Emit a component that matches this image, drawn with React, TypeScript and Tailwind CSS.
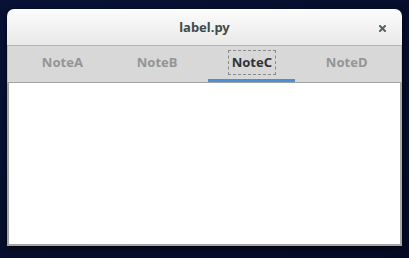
import React from "react";

const tabs = ["NoteA", "NoteB", "NoteC", "NoteD"];

export default function App() {
  const active = 2;
  return (
    <div className="w-[409px] h-[258px] bg-gradient-to-br from-[#081236] to-[#050b24] pt-[9px] pl-[7px] overflow-hidden">
      <div className="w-[395px] h-[237px] flex flex-col rounded-t-[7px] overflow-hidden shadow-[0_2px_6px_rgba(0,0,0,0.7)] font-['Noto_Sans',sans-serif]">
        <div className="relative h-[37px] shrink-0 flex items-center justify-center bg-gradient-to-b from-[#fcfcfc] to-[#e9e9e9] border-b border-[#b4b4b4]">
          <span className="text-[13px] font-bold text-[#414a4c] leading-none">label.py</span>
          <svg className="absolute right-[16px] top-[16px]" width="7" height="7" viewBox="0 0 7 7">
            <path d="M1 1 L6 6 M6 1 L1 6" stroke="#56636a" strokeWidth="2" strokeLinecap="square" />
          </svg>
        </div>
        <div className="h-[37px] shrink-0 flex px-[7px] bg-[#d8d8d8] border-b border-[#a2a2a2] border-x border-x-[#bdbdbd]">
          {tabs.map((t, i) => (
            <div key={t} className="w-[95px] h-full flex flex-col items-center">
              <div className="flex-1 flex items-center">
                <span
                  className={
                    i === active
                      ? "text-[13px] font-bold leading-none text-[#2e3436] px-[3px] py-[5px] border border-dashed border-[#8a8a8a]"
                      : "text-[13px] font-bold leading-none text-[#929596] px-[3px] py-[5px] border border-transparent"
                  }
                >
                  {t}
                </span>
              </div>
              <div className={i === active ? "w-[87px] h-[3px] bg-[#4a90d9]" : "w-[87px] h-[3px]"} />
            </div>
          ))}
        </div>
        <div className="flex-1 bg-white border-2 border-t-0 border-[#a6a6a6]" />
      </div>
    </div>
  );
}
